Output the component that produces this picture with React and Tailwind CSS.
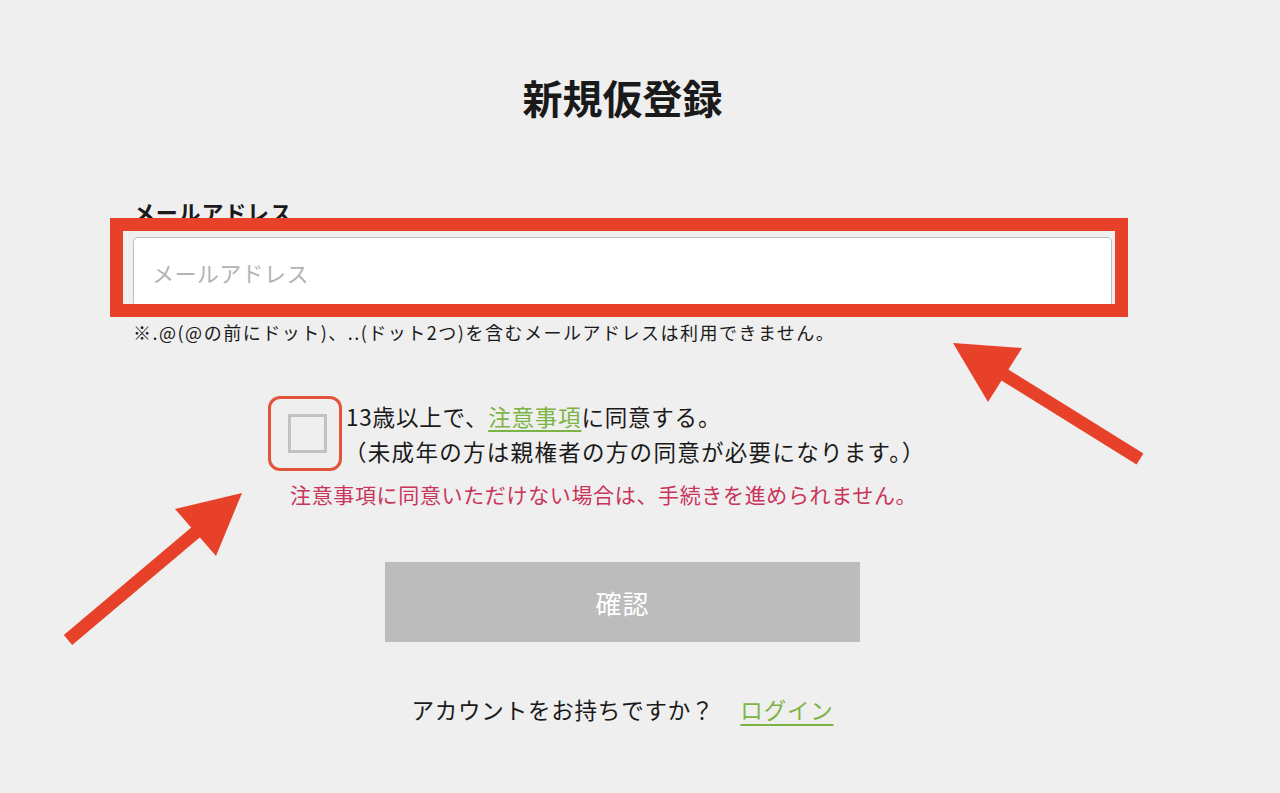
import React from "react";

export default function App() {
  return (
    <div
      className="relative min-h-screen w-full overflow-hidden bg-[#efefef] text-[#1a1a1a]"
      style={{ fontFamily: '"Noto Sans CJK JP", "Noto Sans", sans-serif' }}
    >
      <div className="ml-[133px] flex w-[979px] flex-col pt-[73px]">
        <h1 className="text-center text-[40px] font-bold leading-[48px] tracking-[0px]">
          新規仮登録
        </h1>

        <label className="mt-[75px] text-[22px] font-bold leading-[30px] tracking-[0.8px]">
          メールアドレス
        </label>

        <div className="relative mt-[11px]">
          <input
            type="text"
            placeholder="メールアドレス"
            className="h-[70px] w-full rounded-[5px] border border-[#bdbdbd] bg-white px-[18px] text-[22px] tracking-[0.4px] outline-none placeholder:text-[#b3b3b3]"
          />
          <div className="pointer-events-none absolute left-[-23px] top-[-19px] h-[99px] w-[1018px] border-[13px] border-[#e8412a]" />
        </div>

        <p className="mt-[12px] text-[18px] leading-[26px] tracking-[1.5px]">
          ※.@(@の前にドット)、..(ドット2つ)を含むメールアドレスは利用できません。
        </p>

        <div className="ml-[155px] mt-[54px] flex items-start gap-[19px]">
          <div className="relative mt-[15px] shrink-0">
            <div className="h-[39px] w-[39px] border-[3px] border-[#c2c2c2] bg-[#efefef]" />
            <div className="pointer-events-none absolute left-[-20px] top-[-18px] h-[75px] w-[74px] rounded-[12px] border-[3px] border-[#e2553a]" />
          </div>
          <div className="text-[22.5px] leading-[35px]">
            <div className="tracking-[0.8px]">
              13歳以上で、
              <a href="#" className="text-[#7db446] underline underline-offset-[4px]">
                注意事項
              </a>
              に同意する。
            </div>
            <div className="-ml-[2px] tracking-[1.3px]">（未成年の方は親権者の方の同意が必要になります。）</div>
          </div>
        </div>

        <p className="ml-[157px] mt-[10px] text-[21px] leading-[30px] tracking-[0.65px] text-[#c9345a]">
          注意事項に同意いただけない場合は、手続きを進められません。
        </p>

        <button className="mx-auto mt-[53px] h-[80px] w-[475px] bg-[#bbbcbb] text-[26px] tracking-[1px] text-white">
          確認
        </button>

        <div className="mt-[52px] flex justify-center gap-[26px] text-[22.5px] leading-[30px] tracking-[0.8px]">
          <span>アカウントをお持ちですか？</span>
          <a href="#" className="text-[#7db446] underline underline-offset-[5px]">
            ログイン
          </a>
        </div>
      </div>

      <svg
        className="pointer-events-none absolute left-0 top-0"
        width="1280"
        height="793"
        viewBox="0 0 1280 793"
      >
        <line x1="1140" y1="459" x2="1000" y2="372" stroke="#e8412a" strokeWidth="13" />
        <polygon points="953,343 1022,348 988,402" fill="#e8412a" />
        <line x1="68" y1="640" x2="202" y2="527" stroke="#e8412a" strokeWidth="13" />
        <polygon points="242,493 175,509 216,556" fill="#e8412a" />
      </svg>
    </div>
  );
}
